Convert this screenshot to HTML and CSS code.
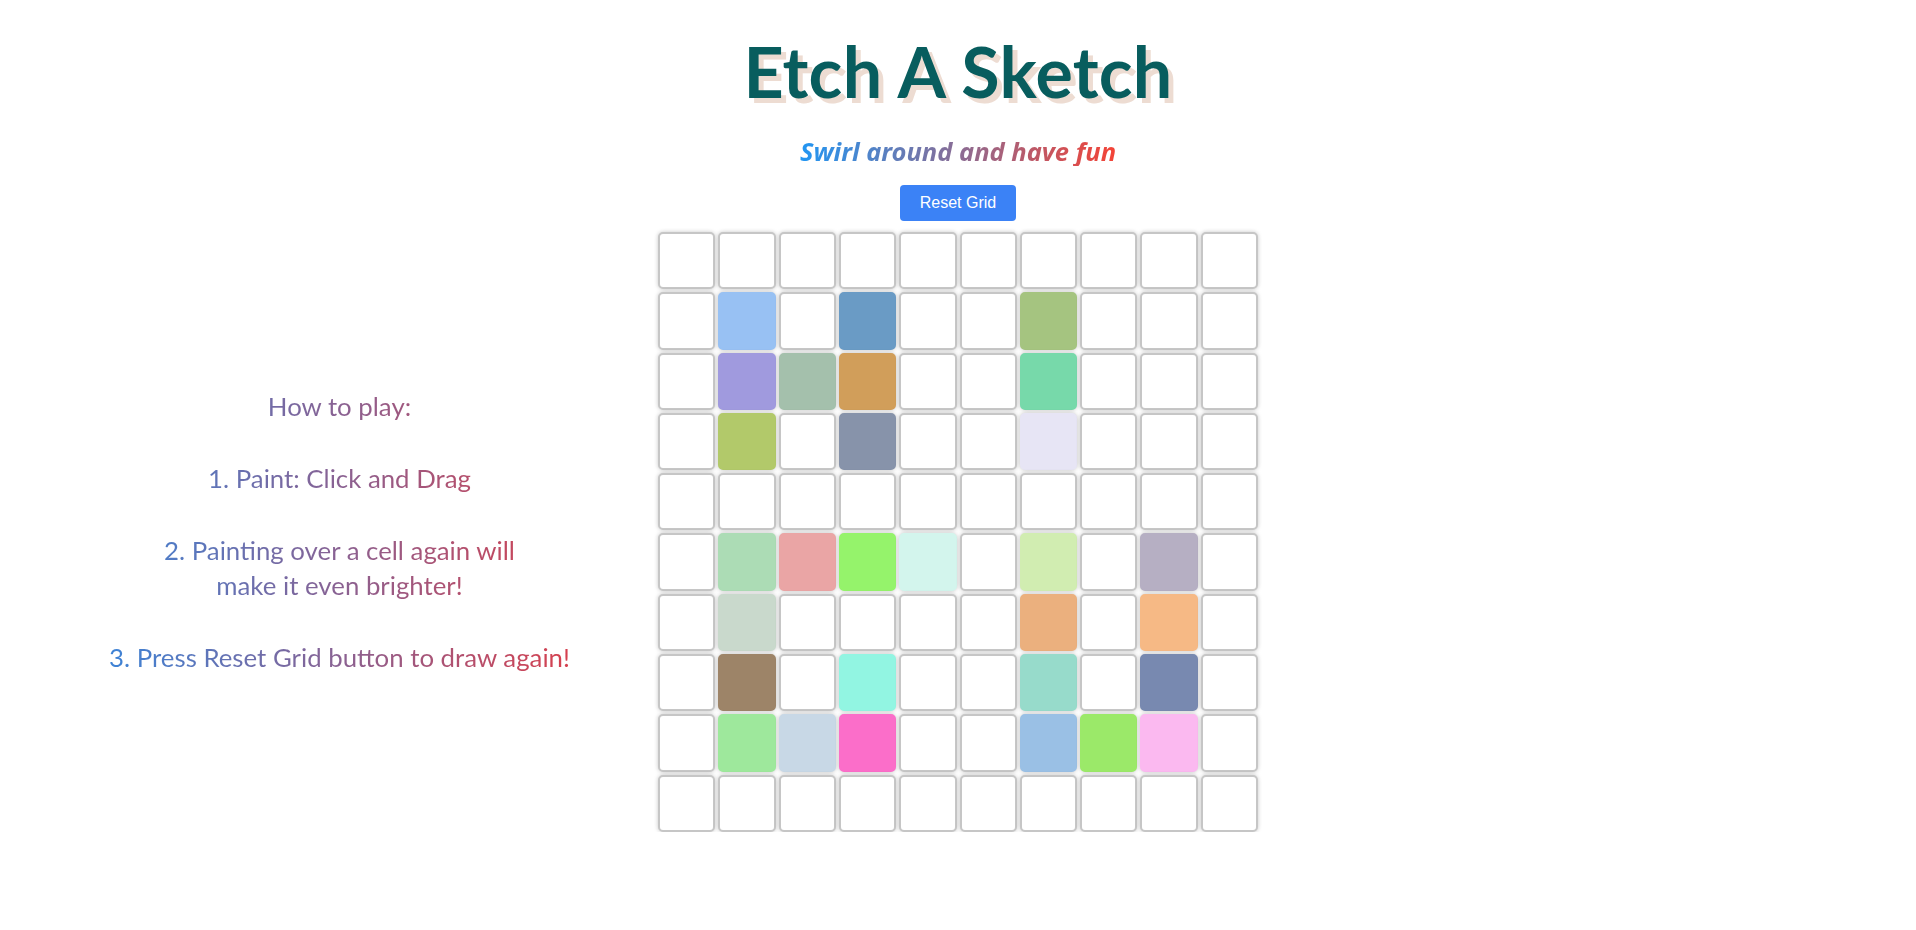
FILE: index.html
```html
<!DOCTYPE html>
<html lang="en">
<head>
<meta charset="utf-8">
<title>Etch A Sketch</title>
<link rel="stylesheet" href="styles.css">
</head>
<body>
<header class="header">
  <h1 class="title">Etch A Sketch</h1>
  <p class="subtitle">Swirl around and have fun</p>
  <button class="reset-btn" type="button">Reset Grid</button>
</header>
<main class="stage">
  <section class="side">
    <div class="instructions">
      <p>How to play:</p>
      <p>1. Paint: Click and Drag</p>
      <p>2. Painting over a cell again will<br>make it even brighter!</p>
      <p>3. Press Reset Grid button to draw again!</p>
    </div>
  </section>
  <div class="board">
    <div class="cell"></div><div class="cell"></div><div class="cell"></div><div class="cell"></div><div class="cell"></div><div class="cell"></div><div class="cell"></div><div class="cell"></div><div class="cell"></div><div class="cell"></div>
    <div class="cell"></div><div class="cell painted" style="--c:#98c1f3"></div><div class="cell"></div><div class="cell painted" style="--c:#6a9bc5"></div><div class="cell"></div><div class="cell"></div><div class="cell painted" style="--c:#a5c480"></div><div class="cell"></div><div class="cell"></div><div class="cell"></div>
    <div class="cell"></div><div class="cell painted" style="--c:#a09ade"></div><div class="cell painted" style="--c:#a4c0ac"></div><div class="cell painted" style="--c:#d19e5a"></div><div class="cell"></div><div class="cell"></div><div class="cell painted" style="--c:#77d9aa"></div><div class="cell"></div><div class="cell"></div><div class="cell"></div>
    <div class="cell"></div><div class="cell painted" style="--c:#b2c96a"></div><div class="cell"></div><div class="cell painted" style="--c:#8793aa"></div><div class="cell"></div><div class="cell"></div><div class="cell painted" style="--c:#e7e5f5"></div><div class="cell"></div><div class="cell"></div><div class="cell"></div>
    <div class="cell"></div><div class="cell"></div><div class="cell"></div><div class="cell"></div><div class="cell"></div><div class="cell"></div><div class="cell"></div><div class="cell"></div><div class="cell"></div><div class="cell"></div>
    <div class="cell"></div><div class="cell painted" style="--c:#acdcb5"></div><div class="cell painted" style="--c:#eaa5a5"></div><div class="cell painted" style="--c:#95f36b"></div><div class="cell painted" style="--c:#d3f5ed"></div><div class="cell"></div><div class="cell painted" style="--c:#d1edb1"></div><div class="cell"></div><div class="cell painted" style="--c:#b6afc3"></div><div class="cell"></div>
    <div class="cell"></div><div class="cell painted" style="--c:#c9d9cc"></div><div class="cell"></div><div class="cell"></div><div class="cell"></div><div class="cell"></div><div class="cell painted" style="--c:#ebb07e"></div><div class="cell"></div><div class="cell painted" style="--c:#f6b985"></div><div class="cell"></div>
    <div class="cell"></div><div class="cell painted" style="--c:#9d8468"></div><div class="cell"></div><div class="cell painted" style="--c:#92f5e2"></div><div class="cell"></div><div class="cell"></div><div class="cell painted" style="--c:#97dbcb"></div><div class="cell"></div><div class="cell painted" style="--c:#7889b0"></div><div class="cell"></div>
    <div class="cell"></div><div class="cell painted" style="--c:#9ee89c"></div><div class="cell painted" style="--c:#c8d8e6"></div><div class="cell painted" style="--c:#fb6ec9"></div><div class="cell"></div><div class="cell"></div><div class="cell painted" style="--c:#9ac0e5"></div><div class="cell painted" style="--c:#9be969"></div><div class="cell painted" style="--c:#fbb9f0"></div><div class="cell"></div>
    <div class="cell"></div><div class="cell"></div><div class="cell"></div><div class="cell"></div><div class="cell"></div><div class="cell"></div><div class="cell"></div><div class="cell"></div><div class="cell"></div><div class="cell"></div>
  </div>
  <div class="side-right"></div>
</main>
</body>
</html>
```

FILE: styles.css
```css
* { box-sizing: border-box; }

html, body {
  margin: 0;
  padding: 0;
  background: #ffffff;
}

body {
  font-family: Lato, "Noto Sans", sans-serif;
}

.header {
  display: flex;
  flex-direction: column;
  align-items: center;
  padding-top: 31px;
}

.title {
  margin: 0;
  font-family: Lato, sans-serif;
  font-weight: 700;
  font-size: 70px;
  line-height: 80px;
  color: #085d5e;
  text-shadow: 5px 5px 0 #eddcd2;
  letter-spacing: 0.3px;
}

.subtitle {
  margin: 25px 0 0;
  font-family: "Noto Sans", sans-serif;
  font-weight: 700;
  font-style: italic;
  font-size: 25.5px;
  line-height: 30px;
  background: linear-gradient(to right, #2196f3, #f44336);
  -webkit-background-clip: text;
  background-clip: text;
  color: transparent;
}

.reset-btn {
  margin-top: 19px;
  height: 36px;
  padding: 0 20px;
  border: none;
  border-radius: 4px;
  background: #3b82f6;
  color: #ffffff;
  font-family: "Liberation Sans", Arial, sans-serif;
  font-size: 16px;
  line-height: 20px;
  cursor: pointer;
}

.stage {
  display: grid;
  grid-template-columns: 1fr auto 1fr;
  margin-top: 11px;
}

.side {
  display: flex;
  align-items: center;
  justify-content: center;
  padding-left: 21px;
}

.instructions {
  width: fit-content;
  text-align: center;
  font-family: Lato, sans-serif;
  font-weight: 400;
  font-size: 25.8px;
  line-height: 35px;
  background: linear-gradient(to right, #3d83d6, #d6404e);
  -webkit-background-clip: text;
  background-clip: text;
  color: transparent;
}

.instructions p {
  margin: 0 0 37px;
}

.instructions p:last-child {
  margin-bottom: 0;
}

.board {
  display: grid;
  grid-template-columns: repeat(10, 57.3px);
  grid-auto-rows: 57.3px;
  gap: 3px;
}

.cell {
  background: #ffffff;
  border: 2px solid #c6c6c6;
  border-radius: 5px;
  box-shadow: 0 0 4px rgba(0, 0, 0, 0.22);
}

.cell.painted {
  background: var(--c);
  border-color: var(--c);
}
```
